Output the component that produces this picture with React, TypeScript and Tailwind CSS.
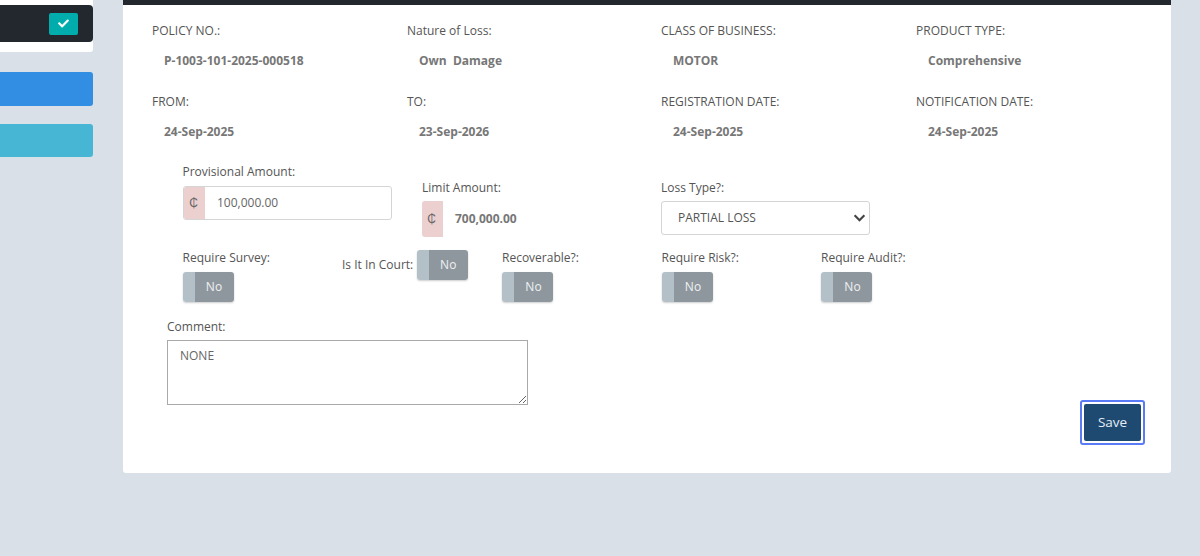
import React from "react";
import { FaCheck } from "react-icons/fa";

const topFields = [
  { label: "POLICY NO.:", value: "P-1003-101-2025-000518" },
  { label: "Nature of Loss:", value: "Own  Damage" },
  { label: "CLASS OF BUSINESS:", value: "MOTOR" },
  { label: "PRODUCT TYPE:", value: "Comprehensive" },
  { label: "FROM:", value: "24-Sep-2025" },
  { label: "TO:", value: "23-Sep-2026" },
  { label: "REGISTRATION DATE:", value: "24-Sep-2025" },
  { label: "NOTIFICATION DATE:", value: "24-Sep-2025" },
];

const labelCls = "text-[12px] leading-[16px] text-[#555]";

const Toggle = () => (
  <div className="flex h-[30px] w-[51px] overflow-hidden rounded-[3px] shadow-[0_1px_2px_rgba(0,0,0,0.2)]">
    <div className="w-[12px] bg-[#b4c0c7]" />
    <div className="flex flex-1 items-center justify-center bg-[#8e979e] text-[12px] text-[#eef1f2]">No</div>
  </div>
);

const ToggleField = ({ label, className }: { label: string; className: string }) => (
  <div className={className}>
    <div className={labelCls}>{label}</div>
    <div className="mt-[6px]">
      <Toggle />
    </div>
  </div>
);

const App = () => {
  return (
    <div className="flex h-[556px] w-[1200px] items-start overflow-hidden bg-[#d9e0e8] font-['Open_Sans',sans-serif]">
      <aside className="w-[93px] shrink-0">
        <div className="h-[52px] rounded-br-[3px] bg-white pt-[5px]">
          <div className="flex h-[37px] items-center justify-end rounded-r-[4px] bg-[#23282f] pr-[15px]">
            <div className="flex h-[22px] w-[29px] items-center justify-center rounded-[2px] bg-[#00adac]">
              <FaCheck className="h-[11px] w-[11px] text-white" />
            </div>
          </div>
        </div>
        <div className="mt-[20px] h-[34px] rounded-r-[3px] bg-[#328ee3]" />
        <div className="mt-[18px] h-[33px] rounded-r-[3px] bg-[#47b5d4]" />
      </aside>

      <main className="ml-[30px] h-[473px] w-[1048px] shrink-0 rounded-b-[3px] bg-white">
        <div className="h-[5px] bg-[#23282f]" />

        <div className="ml-[29px] mt-[18px] grid grid-cols-[255px_254px_255px_1fr] gap-y-[25px]">
          {topFields.map((f) => (
            <div key={f.label}>
              <div className={labelCls}>{f.label}</div>
              <div className="mt-[14px] whitespace-pre pl-[12px] text-[12px] font-bold leading-[16px] text-[#777]">
                {f.value}
              </div>
            </div>
          ))}
        </div>

        <div className="mt-[24px] flex items-start pl-[59.5px]">
          <div className="w-[239.5px]">
            <div className={labelCls}>Provisional Amount:</div>
            <div className="ml-[0.5px] mt-[6px] flex h-[34px] w-[208.5px] overflow-hidden rounded-[3px] border border-[#d5d5d5]">
              <div className="flex w-[21px] items-center justify-center bg-[#ecd0d0] pr-[2px] text-[12px] text-[#666]">₵</div>
              <div className="flex flex-1 items-center pl-[12px] text-[12px] text-[#666]">100,000.00</div>
            </div>
          </div>
          <div className="mt-[16px] w-[239px]">
            <div className={labelCls}>Limit Amount:</div>
            <div className="mt-[5px] flex h-[36px] items-center">
              <div className="flex h-[36px] w-[21px] items-center justify-center rounded-l-[3px] bg-[#ecd0d0] pr-[2px] text-[12px] text-[#666]">₵</div>
              <div className="pl-[12px] text-[12px] font-bold text-[#777]">700,000.00</div>
            </div>
          </div>
          <div className="mt-[16px]">
            <div className={labelCls}>Loss Type?:</div>
            <div className="mt-[5px] flex h-[34px] w-[209px] items-center justify-between rounded-[3px] border border-[#d5d5d5] pl-[16px] pr-[3px] text-[12px] text-[#555]">
              <span>PARTIAL LOSS</span>
              <svg viewBox="0 0 14 9" className="h-[8px] w-[13px]">
                <path d="M1.5 1.5 7 7l5.5-5.5" fill="none" stroke="#444" strokeWidth="2.4" />
              </svg>
            </div>
          </div>
        </div>

        <div className="relative mt-[13px] flex h-[52px] items-start pl-[59.5px]">
          <ToggleField label="Require Survey:" className="w-[319.5px]" />
          <ToggleField label="Recoverable?:" className="w-[159.5px]" />
          <ToggleField label="Require Risk?:" className="w-[159.5px]" />
          <ToggleField label="Require Audit?:" className="w-[160px]" />
          <div className="absolute left-[219px] top-0 flex items-center gap-[3.5px]">
            <span className={labelCls}>Is It In Court:</span>
            <Toggle />
          </div>
        </div>

        <div className="ml-[44px] mt-[17px]">
          <div className={labelCls}>Comment:</div>
          <textarea
            readOnly
            value="NONE"
            className="mt-[5px] block h-[65px] w-[361px] border border-[#a9a9a9] px-[12px] py-[7px] text-[12px] leading-[16px] text-[#666] outline-none"
          />
        </div>

        <div className="mr-[26px] mt-[-5px] flex justify-end">
          <button className="h-[45px] w-[65px] rounded-[3px] border-[2px] border-[#5a7bf5] bg-white p-[2px]">
            <span className="flex h-full w-full items-center justify-center rounded-[2px] bg-[#1e4a72] text-[13.5px] text-[#e5eef5]">
              Save
            </span>
          </button>
        </div>
      </main>
    </div>
  );
};

export default App;
